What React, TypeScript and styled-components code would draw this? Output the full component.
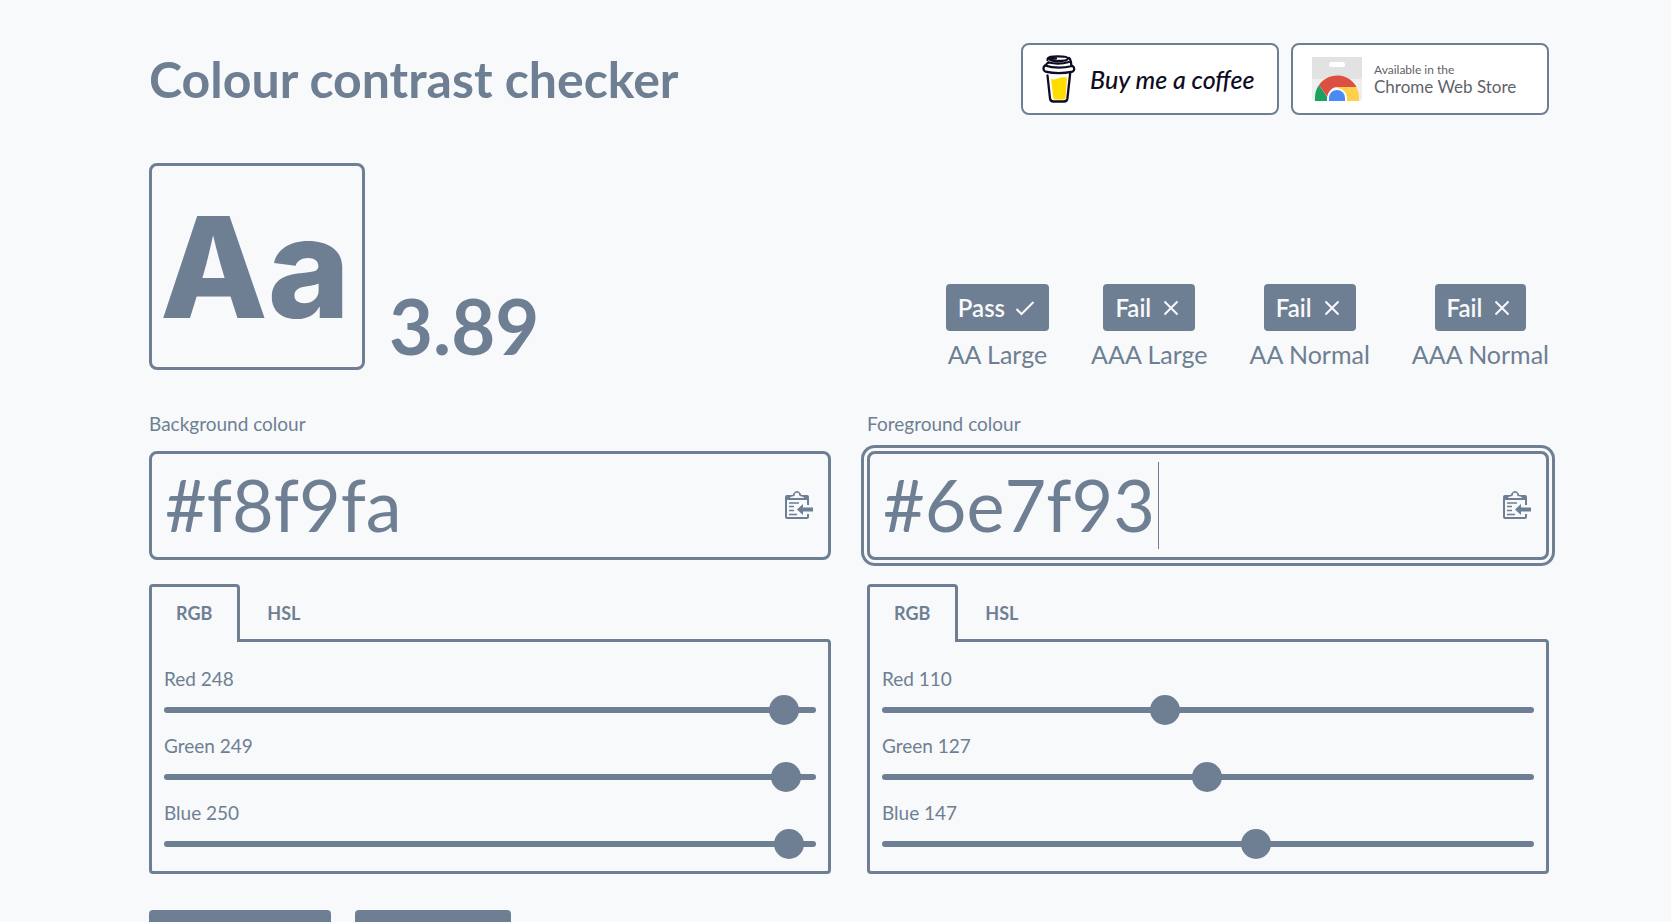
import React, { useState } from "react";
import styled, { createGlobalStyle, css } from "styled-components";

const fg = "#6e7f93";
const bg = "#f8f9fa";

const GlobalStyle = createGlobalStyle`
  *, *::before, *::after { box-sizing: border-box; }
  body {
    margin: 0;
    background: ${bg};
    color: ${fg};
    font-family: Lato, "Open Sans", sans-serif;
    font-size: 19px;
    line-height: 24px;
  }
  button, input { font: inherit; color: inherit; margin: 0; }
`;

const Page = styled.main`
  height: 100vh;
  overflow: hidden;
  padding: 43px 122px 0 149px;
`;

const Header = styled.header`
  display: flex;
  align-items: center;
  justify-content: space-between;
  height: 72px;
`;

const Title = styled.h1`
  margin: 0;
  font-size: 50px;
  line-height: 56px;
  font-weight: 700;
`;

const StoreLinks = styled.nav`
  display: flex;
  gap: 12px;
`;

const StoreLink = styled.a`
  display: flex;
  align-items: center;
  width: 258px;
  height: 72px;
  padding: 0 19px;
  border: 2px solid ${fg};
  border-radius: 8px;
  background: #fff;
  text-decoration: none;
`;

const CoffeeText = styled.span`
  margin-left: 14px;
  color: #0d0c22;
  font-size: 25px;
  font-style: italic;
  font-weight: 500;
  white-space: nowrap;
`;

const StoreText = styled.span`
  display: flex;
  flex-direction: column;
  margin-left: 12px;
  color: #5f6368;
  white-space: nowrap;
`;

const StoreSmall = styled.span`
  font-size: 12px;
  line-height: 16px;
`;

const StoreName = styled.span`
  font-size: 17px;
  line-height: 18px;
`;

const Summary = styled.section`
  display: flex;
  align-items: flex-end;
  justify-content: space-between;
  margin-top: 48px;
`;

const Score = styled.div`
  display: flex;
  align-items: flex-end;
  gap: 24px;
`;

const Sample = styled.div`
  display: flex;
  align-items: center;
  width: 216px;
  height: 207px;
  padding-left: 8px;
  border: 3px solid ${fg};
  border-radius: 8px;
  font-family: Inter, sans-serif;
  font-size: 140px;
  line-height: 160px;
  font-weight: 800;
`;

const Ratio = styled.output`
  font-size: 76px;
  line-height: 88px;
  font-weight: 700;
`;

const Results = styled.ul`
  display: flex;
  gap: 42px;
  margin: 0;
  padding: 0;
  list-style: none;
`;

const Result = styled.li`
  display: flex;
  flex-direction: column;
  align-items: center;
  gap: 8px;
  font-size: 25px;
  line-height: 31px;
`;

const Badge = styled.strong`
  display: flex;
  align-items: center;
  gap: 8px;
  height: 47px;
  padding: 0 12px;
  border-radius: 4px;
  background: ${fg};
  color: ${bg};
  font-size: 24px;
  font-weight: 600;
`;

const Columns = styled.div`
  display: grid;
  grid-template-columns: 1fr 1fr;
  gap: 36px;
  margin-top: 42px;
`;

const ColumnBox = styled.section`
  min-width: 0;
`;

const FieldLabel = styled.label`
  display: block;
`;

const Field = styled.div<{ $focused: boolean }>`
  position: relative;
  display: flex;
  align-items: center;
  height: 109px;
  margin-top: 15px;
  padding: 0 15px 2px 13px;
  border: 3px solid ${fg};
  border-radius: 8px;
  ${(p) =>
    p.$focused &&
    css`
      box-shadow: 0 0 0 3px ${bg}, 0 0 0 6px ${fg};
    `}
`;

const HexInput = styled.input`
  flex: 1;
  min-width: 0;
  height: 100px;
  padding: 0 0 2px;
  border: 0;
  outline: 0;
  background: transparent;
  font-size: 72px;
  line-height: 96px;
  caret-color: transparent;
`;

const Caret = styled.span`
  position: absolute;
  left: 288px;
  top: 8px;
  width: 1px;
  height: 87px;
  background: ${fg};
`;

const IconButton = styled.button`
  display: flex;
  padding: 0;
  border: 0;
  background: none;
`;

const Tabs = styled.div`
  position: relative;
  z-index: 1;
  display: flex;
  margin: 24px 0 -3px;
`;

const Tab = styled.button<{ $active: boolean }>`
  height: 58px;
  padding: 0 25px 4px 24px;
  border: 3px solid ${(p) => (p.$active ? fg : "transparent")};
  border-bottom: 0;
  border-radius: 4px 4px 0 0;
  background: ${(p) => (p.$active ? bg : "none")};
  font-size: 18px;
  font-weight: 700;
`;

const Panel = styled.div`
  display: grid;
  gap: 9px;
  padding: 25px 12px 12px;
  border: 3px solid ${fg};
  border-radius: 0 4px 4px 4px;
`;

const SliderRow = styled.div`
  display: flex;
  flex-direction: column;
  gap: 4px;
`;

const Range = styled.input`
  appearance: none;
  display: block;
  width: 100%;
  height: 30px;
  background: transparent;
  &::-webkit-slider-runnable-track {
    height: 6px;
    border-radius: 3px;
    background: ${fg};
  }
  &::-webkit-slider-thumb {
    appearance: none;
    width: 30px;
    height: 30px;
    margin-top: -12px;
    border-radius: 50%;
    background: ${fg};
  }
`;

const Actions = styled.div`
  display: flex;
  gap: 24px;
  margin-top: 36px;
`;

const Action = styled.button<{ $wide?: boolean }>`
  width: ${(p) => (p.$wide ? 182 : 156)}px;
  height: 48px;
  border: 0;
  border-radius: 4px;
  background: ${fg};
`;

const CupIcon = () => (
  <svg width="34" height="48" viewBox="0 0 34 48" fill="none" stroke="#0d0c22" strokeWidth="2.300" strokeLinecap="round" strokeLinejoin="round" aria-hidden="true">
    <path d="M9 24c4 2 8-3 16-1.500l-1.500 20.500q-.3 1.500-2 1.500h-8q-2 0-2.200-1.500z" fill="#ffdd00" stroke="none" />
    <path d="M5.500 20.500l2.500 23q.4 3 3.500 3h10.500q3 0 3.400-3l2.800-25.500" />
    <path d="M3 10.500C.8 12 1 16 3.500 16.600c8 1.800 19 1.700 27 0 2.300-1 2.300-4.300 0-5.600C22 13 11 13.200 3 10.500z" />
    <path d="M4 10c.5-1.500 1.500-2 2.500-2.500M27 3c1.700 1 2 3 2.300 7" />
    <path d="M6.500 7.500C13 9 20 9 27 7M5.500 5c0-3.500 5-3.700 10-3.700S26 1.500 26 3.500 20 6 15.500 6 8 5.500 8 4.500s3-1.200 6-1.200" />
  </svg>
);

const ChromeIcon = () => (
  <svg width="50" height="44" viewBox="0 0 50 44" aria-hidden="true">
    <path d="M0 0h50v41q0 3-3 3H3q-3 0-3-3z" fill="#efefef" />
    <path d="M0 0h50v22H0z" fill="#e2e2e2" />
    <rect x="17" y="5" width="16" height="5" rx="2.500" fill="#fff" />
    <path d="M3 44v-4a22 22 0 0 1 4-12l11 16z" fill="#1aa260" />
    <path d="M7 28a22 22 0 0 1 37.500 2H25c-5 0-8 4-9.500 10z" fill="#de4f43" />
    <path d="M25 30h19.500A22 22 0 0 1 47 40v4H30z" fill="#ffd04b" />
    <path d="M15 44v-3a10 10 0 0 1 20 0v3z" fill="#fff" />
    <path d="M17 44v-3a8 8 0 0 1 16 0v3z" fill="#4a8af4" />
  </svg>
);

const PasteIcon = () => (
  <svg width="28" height="28" viewBox="0 0 28 28" aria-hidden="true">
    <path d="M23 14V6q0-1-1-1H2Q1 5 1 6v20q0 1 1 1h20q1 0 1-1v-3" fill="none" stroke={fg} strokeWidth="2" />
    <path d="M1 4.500h5.500q1.500-.3 2-2Q9.500 0 12 0t3.500 2.500q.5 1.700 2 2H23V9H1z" fill={fg} />
    <path d="M5 7q.2-1.400 2-1.500 3 0 3-2.500 0-1.300 2-1.300T14 3q0 2.500 3 2.500 1.800.1 2 1.500z" fill={bg} />
    <path d="M4 12h10M4 15.500h5M4 19.500h5M4 23.500h8" stroke={fg} strokeWidth="1.500" />
    <path d="M12 18.500l6-5.500v3.500h10v4H18V24z" fill={fg} />
  </svg>
);

const StatusIcon = ({ pass }: { pass: boolean }) => (
  <svg width="24" height="24" viewBox="0 0 24 24" fill="none" stroke="currentColor" strokeWidth="2" aria-hidden="true">
    {pass ? <path d="M3.500 13l5 5L20.500 6" /> : <path d="M5.500 5.500l13 13M18.500 5.500l-13 13" />}
  </svg>
);

type Channel = { name: string; value: number };

function ColourColumn({ id, label, hex, channels, focused = false }: { id: string; label: string; hex: string; channels: Channel[]; focused?: boolean }) {
  const [values, setValues] = useState(channels.map((c) => c.value));
  return (
    <ColumnBox>
      <FieldLabel htmlFor={id}>{label}</FieldLabel>
      <Field $focused={focused}>
        <HexInput id={id} type="text" defaultValue={hex} spellCheck={false} />
        {focused && <Caret />}
        <IconButton type="button" aria-label="Paste colour">
          <PasteIcon />
        </IconButton>
      </Field>
      <Tabs role="tablist">
        <Tab type="button" role="tab" aria-selected $active>RGB</Tab>
        <Tab type="button" role="tab" aria-selected={false} $active={false}>HSL</Tab>
      </Tabs>
      <Panel role="tabpanel">
        {channels.map((c, i) => (
          <SliderRow key={c.name}>
            <label htmlFor={`${id}-${c.name}`}>{`${c.name} ${values[i]}`}</label>
            <Range
              id={`${id}-${c.name}`}
              type="range"
              min={0}
              max={255}
              value={values[i]}
              onChange={(e) => setValues(values.map((v, n) => (n === i ? Number(e.target.value) : v)))}
            />
          </SliderRow>
        ))}
      </Panel>
    </ColumnBox>
  );
}

const results = [
  { pass: true, label: "AA Large" },
  { pass: false, label: "AAA Large" },
  { pass: false, label: "AA Normal" },
  { pass: false, label: "AAA Normal" },
];

export default function App() {
  return (
    <>
      <GlobalStyle />
      <Page>
        <Header>
          <Title>Colour contrast checker</Title>
          <StoreLinks>
            <StoreLink href="#coffee">
              <CupIcon />
              <CoffeeText>Buy me a coffee</CoffeeText>
            </StoreLink>
            <StoreLink href="#store">
              <ChromeIcon />
              <StoreText>
                <StoreSmall>Available in the</StoreSmall>
                <StoreName>Chrome Web Store</StoreName>
              </StoreText>
            </StoreLink>
          </StoreLinks>
        </Header>
        <Summary>
          <Score>
            <Sample>Aa</Sample>
            <Ratio>3.89</Ratio>
          </Score>
          <Results>
            {results.map((r) => (
              <Result key={r.label}>
                <Badge>
                  {r.pass ? "Pass" : "Fail"}
                  <StatusIcon pass={r.pass} />
                </Badge>
                {r.label}
              </Result>
            ))}
          </Results>
        </Summary>
        <Columns>
          <ColourColumn
            id="background"
            label="Background colour"
            hex="#f8f9fa"
            channels={[{ name: "Red", value: 248 }, { name: "Green", value: 249 }, { name: "Blue", value: 250 }]}
          />
          <ColourColumn
            id="foreground"
            label="Foreground colour"
            hex="#6e7f93"
            focused
            channels={[{ name: "Red", value: 110 }, { name: "Green", value: 127 }, { name: "Blue", value: 147 }]}
          />
        </Columns>
        <Actions>
          <Action type="button" $wide aria-label="Reverse colours" />
          <Action type="button" aria-label="Share colours" />
        </Actions>
      </Page>
    </>
  );
}
